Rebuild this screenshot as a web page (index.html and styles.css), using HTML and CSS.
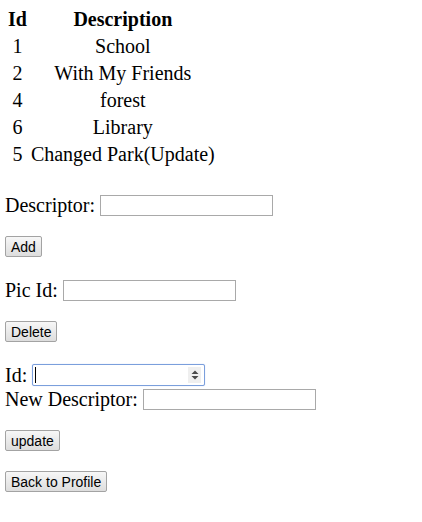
FILE: index.html
```html
<!DOCTYPE html>
<html>
<head>
<meta charset="utf-8">
<title>Descriptors</title>
<link rel="stylesheet" href="styles.css">
</head>
<body>
<table class="list">
  <tr><th>Id</th><th>Description</th></tr>
  <tr><td>1</td><td>School</td></tr>
  <tr><td>2</td><td>With My Friends</td></tr>
  <tr><td>4</td><td>forest</td></tr>
  <tr><td>6</td><td>Library</td></tr>
  <tr><td>5</td><td>Changed Park(Update)</td></tr>
</table>

<form class="block first">
  <div class="row"><span>Descriptor:</span><input class="field" type="text"></div>
  <button class="btn" type="button">Add</button>
</form>

<form class="block">
  <div class="row"><span>Pic Id:</span><input class="field" type="text"></div>
  <button class="btn" type="button">Delete</button>
</form>

<form class="block">
  <div class="row row-id"><span>Id:</span><span class="num-wrap"><input class="field focused" type="text"><span class="caret"></span><span class="spin"><svg width="8" height="12" viewBox="0 0 8 12"><path d="M4 1.5 L7.5 5 L0.5 5 Z M4 10.5 L7.5 7 L0.5 7 Z" fill="#4a4a4a"/></svg></span></span></div>
  <div class="row"><span>New Descriptor:</span><input class="field" type="text"></div>
  <button class="btn" type="button">update</button>
</form>

<button class="btn back" type="button">Back to Profile</button>
</body>
</html>
```
FILE: styles.css
```css
html, body {
  background: #ffffff;
}
body {
  margin: 5px;
  font-family: "Liberation Serif", "Times New Roman", serif;
  font-size: 20px;
  color: #000;
}
.list {
  border-spacing: 2px;
}
.list th, .list td {
  padding: 1px;
  text-align: center;
  line-height: 23px;
}
.list th {
  font-weight: bold;
}
.block {
  margin: 21px 0 0 0;
}
.block.first {
  margin-top: 24px;
}
.row {
  display: flex;
  align-items: center;
  gap: 5px;
  height: 25px;
  line-height: 23px;
}
.row-id {
  height: 24px;
}
.field {
  box-sizing: border-box;
  width: 173px;
  height: 21px;
  border: 1px solid #a9a9a9;
  padding: 1px 2px;
  font-family: "Liberation Sans", Arial, sans-serif;
  font-size: 13px;
  background: #fff;
  margin: 0;
  display: block;
}
.num-wrap {
  position: relative;
  display: block;
}
.field.focused {
  height: 22px;
  border: 1px solid #7b9fdc;
  border-radius: 2px;
  outline: none;
  box-shadow: 0 0 1px #a9c2ee;
}
.caret {
  position: absolute;
  left: 3px;
  top: 3px;
  width: 1px;
  height: 16px;
  background: #000;
}
.spin {
  position: absolute;
  right: 4px;
  top: 3px;
  width: 13px;
  height: 16px;
  background: #efefef;
  display: flex;
  align-items: center;
  justify-content: center;
}
.btn {
  display: block;
  box-sizing: border-box;
  font-family: "Liberation Sans", Arial, sans-serif;
  font-size: 14px;
  height: 21px;
  padding: 0 5px;
  margin: 18px 0 0 0;
  border: 1px solid #a3a3a3;
  border-radius: 2px;
  background: linear-gradient(#f7f7f7, #dddddd);
  color: #000;
}
.btn.back {
  margin-top: 20px;
}
```
